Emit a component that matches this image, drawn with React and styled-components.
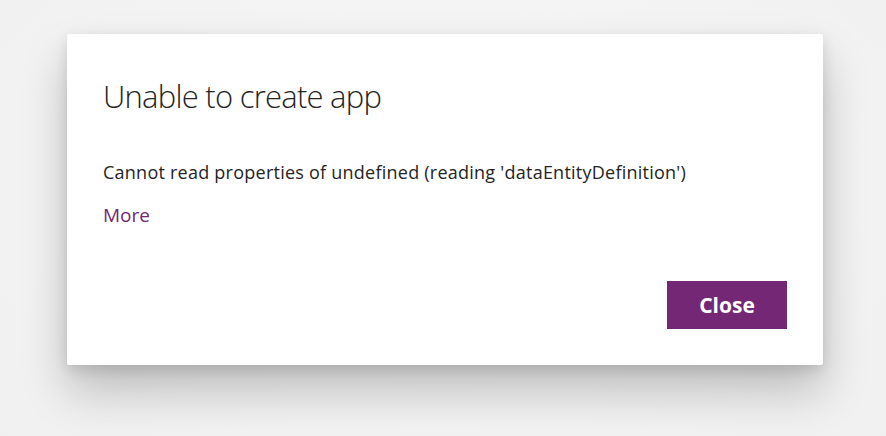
import React from "react";
import styled, { createGlobalStyle } from "styled-components";

const Global = createGlobalStyle`
  html, body { margin: 0; padding: 0; }
  body {
    width: 886px;
    height: 436px;
    overflow: hidden;
    background: #f3f2f2;
    font-family: "Open Sans", "Noto Sans", sans-serif;
  }
`;

const Backdrop = styled.div`
  width: 886px;
  height: 436px;
  box-sizing: border-box;
  padding: 34px 0 0 67px;
  background: radial-gradient(ellipse at 50% 40%, #f8f7f7 0%, #f1f0f0 100%);
`;

const Dialog = styled.div`
  width: 756px;
  height: 331px;
  box-sizing: border-box;
  background: #ffffff;
  border-radius: 2px;
  box-shadow: 0 26px 46px rgba(0, 0, 0, 0.22), 0 5px 14px rgba(0, 0, 0, 0.12);
  padding: 42px 36px 36px 36px;
  display: flex;
  flex-direction: column;
`;

const Title = styled.h1`
  margin: 0;
  font-size: 31px;
  font-weight: 300;
  line-height: 40px;
  letter-spacing: -0.75px;
  color: #252423;
`;

const Message = styled.p`
  margin: 44px 0 0;
  font-size: 18px;
  line-height: 24px;
  letter-spacing: 0.24px;
  color: #252423;
`;

const MoreLink = styled.a`
  margin-top: 19px;
  font-size: 19px;
  line-height: 24px;
  color: #742774;
  text-decoration: none;
  align-self: flex-start;
`;

const Footer = styled.div`
  margin-top: auto;
  display: flex;
  justify-content: flex-end;
`;

const Button = styled.button`
  width: 120px;
  height: 48px;
  border: none;
  padding: 0;
  background: #742774;
  color: #ffffff;
  font-family: "Open Sans", "Noto Sans", sans-serif;
  font-weight: 700;
  font-size: 21px;
  cursor: pointer;
`;

export default function App() {
  return (
    <>
      <Global />
      <Backdrop>
        <Dialog>
          <Title>Unable to create app</Title>
          <Message>
            Cannot read properties of undefined (reading 'dataEntityDefinition')
          </Message>
          <MoreLink href="#">More</MoreLink>
          <Footer>
            <Button>Close</Button>
          </Footer>
        </Dialog>
      </Backdrop>
    </>
  );
}
